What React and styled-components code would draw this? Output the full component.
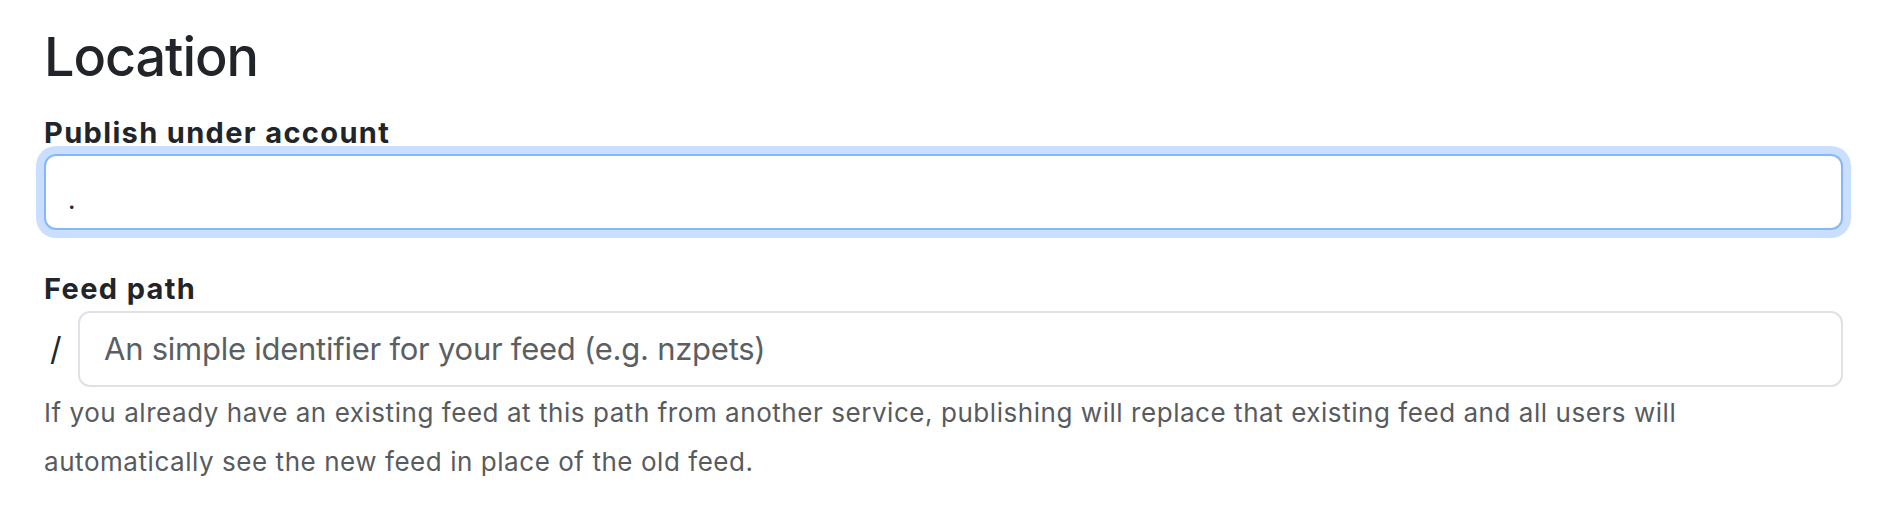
import styled, { createGlobalStyle } from "styled-components";

const GlobalStyle = createGlobalStyle`
  body {
    margin: 0;
    background: #fff;
    font-family: Inter, "Noto Sans", "Liberation Sans", sans-serif;
    color: #212529;
  }
  * {
    box-sizing: border-box;
  }
`;

const Page = styled.main`
  padding: 25px 43px 0 44px;
`;

const Heading = styled.h1`
  margin: 0 0 21px;
  font-size: 54px;
  font-weight: 500;
  line-height: 1.2;
  letter-spacing: -1.1px;
  color: #212529;
`;

const Field = styled.div`
  margin-bottom: ${(props) => props.$gap || 0}px;
`;

const Label = styled.label`
  display: block;
  font-size: 29px;
  font-weight: 700;
  line-height: 1.5;
  letter-spacing: 1.35px;
  color: #212529;
`;

const Input = styled.input`
  display: block;
  width: 100%;
  height: 76px;
  padding: ${(props) => (props.$focused ? "14px 24px 0 22px" : "0 24px")};
  font-family: inherit;
  font-size: ${(props) => (props.$focused ? 26 : 31)}px;
  color: #212529;
  background: #fff;
  border: 2px solid ${(props) => (props.$focused ? "#86b7fe" : "#dee2e6")};
  border-radius: 12px;
  outline: none;
  box-shadow: ${(props) =>
    props.$focused ? "0 0 0 8px rgba(13, 110, 253, 0.22)" : "none"};

  &::placeholder {
    color: #5b5f64;
    letter-spacing: -0.25px;
    opacity: 1;
  }
`;

const InputGroup = styled.div`
  display: flex;
  align-items: center;
`;

const Prefix = styled.span`
  flex: 0 0 34px;
  padding-left: 6px;
  font-size: 32px;
  line-height: 1;
  color: #212529;
`;

const Help = styled.p`
  margin: 1px 0 0;
  font-size: 26px;
  line-height: 49px;
  letter-spacing: 0.55px;
  color: #585b5e;
`;

export default function App() {
  return (
    <>
      <GlobalStyle />
      <Page>
        <Heading>Location</Heading>
        <Field $gap={37}>
          <Label htmlFor="account">Publish under account</Label>
          <Input id="account" $focused defaultValue="." />
        </Field>
        <Field>
          <Label htmlFor="path">Feed path</Label>
          <InputGroup>
            <Prefix>/</Prefix>
            <Input
              id="path"
              placeholder="An simple identifier for your feed (e.g. nzpets)"
            />
          </InputGroup>
          <Help>
            If you already have an existing feed at this path from another
            service, publishing will replace that existing feed and all users
            will automatically see the new feed in place of the old feed.
          </Help>
        </Field>
      </Page>
    </>
  );
}
